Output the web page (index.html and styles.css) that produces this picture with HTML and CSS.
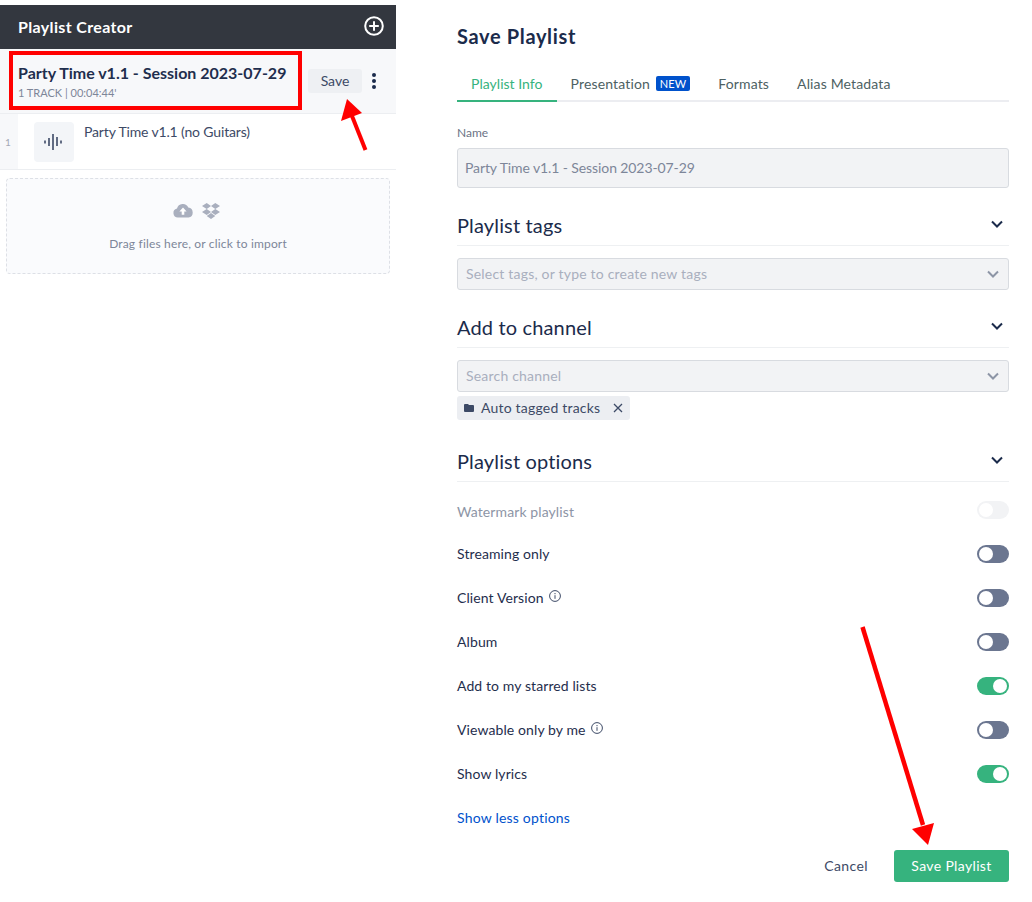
FILE: index.html
```html
<!DOCTYPE html>
<html lang="en">
<head>
<meta charset="utf-8">
<title>Save Playlist</title>
<link rel="stylesheet" href="styles.css">
</head>
<body>
<div class="page">
  <aside class="left">
    <header class="lhead">
      <span class="lhead-title">Playlist Creator</span>
      <svg class="plus" viewBox="0 0 20 20" width="20" height="20"><circle cx="10" cy="10" r="8.8" fill="none" stroke="#fff" stroke-width="2"/><path d="M10 5.2v9.6M5.2 10h9.6" stroke="#fff" stroke-width="2" fill="none"/></svg>
    </header>
    <div class="session">
      <div class="session-info">
        <div class="session-name">Party Time v1.1 - Session 2023-07-29</div>
        <div class="session-meta">1 TRACK | 00:04:44'</div>
      </div>
      <button class="save-small">Save</button>
      <svg class="dots" viewBox="0 0 4 16" width="4" height="16"><circle cx="2" cy="2" r="2"/><circle cx="2" cy="8" r="2"/><circle cx="2" cy="14" r="2"/></svg>
    </div>
    <div class="track">
      <div class="track-num">1</div>
      <div class="track-tile">
        <svg viewBox="0 0 20 16" width="20" height="16"><path d="M1 6.5v3M5 4v8M9 0v16M13 3v9M17 6.5v3" stroke="#3d4a66" stroke-width="1.6" fill="none"/></svg>
      </div>
      <div class="track-name">Party Time v1.1 (no Guitars)</div>
    </div>
    <div class="drop">
      <div class="drop-icons">
        <svg viewBox="0 0 20 15" width="20" height="15"><path d="M5 14.5a4.5 4.5 0 0 1-1-8.9A6 6 0 0 1 15.3 4.6 5 5 0 0 1 15.5 14.5Z" fill="#a9afbe"/><path d="M10 4.5l3.6 4h-2.3v3.3H8.7V8.500H6.400Z" fill="#fff"/></svg>
        <svg viewBox="0 0 18 16" width="18" height="16"><path d="M4.700 0 0 3l4.700 3L9 3ZM13.300 0 9 3l4.300 3L18 3ZM0 9l4.700 3L9 9 4.700 6ZM13.300 6 9 9l4.300 3L18 9ZM4.700 13 9 16l4.300-3L9 10Z" fill="#a9afbe"/></svg>
      </div>
      <div class="drop-text">Drag files here, or click to import</div>
    </div>
  </aside>

  <main class="right">
    <h1 class="title">Save Playlist</h1>
    <nav class="tabs">
      <a class="tab tab-on">Playlist Info</a>
      <a class="tab">Presentation <span class="new">NEW</span></a>
      <a class="tab">Formats</a>
      <a class="tab">Alias Metadata</a>
    </nav>
    <label class="label">Name</label>
    <div class="input">Party Time v1.1 - Session 2023-07-29</div>

    <div class="sec sec-tags">
      <h2>Playlist tags</h2>
      <svg class="chev" viewBox="0 0 12 8" width="12" height="8"><path d="M1 1.500l5 5 5-5" fill="none" stroke="#1b2b4b" stroke-width="2"/></svg>
    </div>
    <div class="select">
      <span class="ph">Select tags, or type to create new tags</span>
      <svg viewBox="0 0 12 8" width="12" height="8"><path d="M1 1.500l5 5 5-5" fill="none" stroke="#8d95a6" stroke-width="2"/></svg>
    </div>

    <div class="sec sec-chan">
      <h2>Add to channel</h2>
      <svg class="chev" viewBox="0 0 12 8" width="12" height="8"><path d="M1 1.500l5 5 5-5" fill="none" stroke="#1b2b4b" stroke-width="2"/></svg>
    </div>
    <div class="select">
      <span class="ph">Search channel</span>
      <svg viewBox="0 0 12 8" width="12" height="8"><path d="M1 1.500l5 5 5-5" fill="none" stroke="#8d95a6" stroke-width="2"/></svg>
    </div>
    <div class="chip">
      <svg viewBox="0 0 10 8" width="10" height="8"><path d="M0 1a1 1 0 0 1 1-1h3l1 1h4a1 1 0 0 1 1 1v5a1 1 0 0 1-1 1H1a1 1 0 0 1-1-1Z" fill="#3d4a66"/></svg>
      <span class="ph">Auto tagged tracks</span>
      <svg class="chip-x" viewBox="0 0 10 10" width="10" height="10"><path d="M1 1l8 8M9 1l-8 8" stroke="#3d4a66" stroke-width="1.300" fill="none"/></svg>
    </div>

    <div class="sec sec-opts">
      <h2>Playlist options</h2>
      <svg class="chev" viewBox="0 0 12 8" width="12" height="8"><path d="M1 1.500l5 5 5-5" fill="none" stroke="#1b2b4b" stroke-width="2"/></svg>
    </div>
    <div class="opts">
      <div class="opt opt-muted"><span class="opt-label">Watermark playlist</span><span class="tg tg-dis"></span></div>
      <div class="opt"><span class="opt-label">Streaming only</span><span class="tg"></span></div>
      <div class="opt"><span class="opt-label">Client Version <svg class="info" viewBox="0 0 12 12" width="12" height="12"><circle cx="6" cy="6" r="5.400" fill="none" stroke="#3d4a66"/><path d="M6 5.200v3.600M6 3v1.200" stroke="#3d4a66" fill="none"/></svg></span><span class="tg"></span></div>
      <div class="opt"><span class="opt-label">Album</span><span class="tg"></span></div>
      <div class="opt"><span class="opt-label">Add to my starred lists</span><span class="tg tg-on"></span></div>
      <div class="opt"><span class="opt-label">Viewable only by me <svg class="info" viewBox="0 0 12 12" width="12" height="12"><circle cx="6" cy="6" r="5.400" fill="none" stroke="#3d4a66"/><path d="M6 5.200v3.600M6 3v1.200" stroke="#3d4a66" fill="none"/></svg></span><span class="tg"></span></div>
      <div class="opt"><span class="opt-label">Show lyrics</span><span class="tg tg-on"></span></div>
      <div class="opt"><a class="more opt-label">Show less options</a></div>
    </div>
    <footer class="foot">
      <button class="cancel">Cancel</button>
      <button class="primary">Save Playlist</button>
    </footer>
  </main>
</div>
<svg class="marks" viewBox="0 0 1032 902" width="1032" height="902">
  <rect x="11" y="53" width="289" height="55" fill="none" stroke="#f00" stroke-width="4"/>
  <path d="M352 116l13.500 34" stroke="#f00" stroke-width="4" fill="none"/>
  <path d="M347 99l15 14-21 8Z" fill="#f00"/>
  <path d="M862.500 627l60.500 198" stroke="#f00" stroke-width="4.500" fill="none"/>
  <path d="M928 845l-16-16 22-6Z" fill="#f00"/>
</svg>
</body>
</html>
```
FILE: styles.css
```css
* { box-sizing: border-box; }
html, body { margin: 0; padding: 0; background: #fff; }
body { font-family: Lato, "Liberation Sans", sans-serif; color: #1b2b4b; height: 902px; overflow: hidden; position: relative; }
button { font: inherit; border: 0; cursor: pointer; }
.page { display: flex; align-items: flex-start; }

.left { width: 396px; flex: none; margin-top: 5px; }
.lhead { height: 44px; background: #33373f; display: flex; align-items: center; justify-content: space-between; padding: 0 12px 2px 18px; }
.lhead-title { color: #fff; font-size: 16px; font-weight: 700; letter-spacing: .35px; }
.session { height: 65px; background: #f7f8fa; border-bottom: 1px solid #eceef1; display: flex; align-items: center; padding: 0 20px 0 18px; }
.session-info { flex: 1; }
.session-name { font-size: 16px; font-weight: 700; color: #1f2e4d; white-space: nowrap; }
.session-meta { font-size: 11px; color: #7d8699; margin-top: 4px; }
.save-small { width: 54px; height: 24px; background: #eef0f3; color: #3d4a66; border-radius: 3px; font-size: 14px; margin-right: 10px; padding: 0 0 2px; }
.dots { fill: #1b2b4b; }
.track { height: 56px; border-bottom: 1px solid #eceef1; display: flex; align-items: flex-start; }
.track-num { width: 18px; height: 55px; background: #f7f8fa; color: #a3a9b6; font-size: 10px; line-height: 56px; padding-left: 5px; }
.track-tile { width: 40px; height: 40px; margin: 8px 10px 0 16px; background: #f3f5f8; border-radius: 4px; display: flex; align-items: center; justify-content: center; }
.track-name { font-size: 14px; letter-spacing: -.15px; color: #3d4a66; line-height: 18px; margin-top: 9px; }
.drop { height: 96px; margin: 8px 6px 0; background: #fafbfd; border: 1px dashed #dde0e6; border-radius: 4px; display: flex; flex-direction: column; align-items: center; padding-top: 23px; }
.drop-icons { display: flex; gap: 9px; align-items: center; height: 17px; padding-right: 4px; }
.drop-text { font-size: 12px; letter-spacing: .17px; color: #7d8699; margin-top: 17px; line-height: 16px; }

.right { width: 552px; flex: none; margin-left: 61px; padding-top: 24px; }
.title { margin: 0; font-size: 20px; line-height: 24px; font-weight: 700; color: #1b2b4b; letter-spacing: .65px; }
.tabs { display: flex; margin-top: 24px; height: 30px; border-bottom: 2px solid #ecedf1; }
.tab { font-size: 14px; line-height: 24px; height: 30px; color: #4d6163; padding: 0 14px; white-space: nowrap; letter-spacing: .15px; }
.tab-on { color: #36b37e; border-bottom: 2px solid #36b37e; letter-spacing: .03px; }
.new { display: inline-block; background: #0052cc; color: #fff; font-size: 11px; line-height: 15px; padding: 0 4px; border-radius: 2px; margin-left: 2px; vertical-align: 1px; letter-spacing: .1px; }
.label { display: block; font-size: 12px; color: #6b7385; margin-top: 23px; line-height: 16px; }
.input { height: 40px; margin-top: 7px; background: #f2f3f5; border: 1px solid #d8dbe0; border-radius: 3px; padding: 0 7px; line-height: 38px; font-size: 14px; letter-spacing: -.1px; color: #7d8699; }
.sec { display: flex; align-items: center; justify-content: space-between; height: 40px; border-bottom: 1px solid #eef0f2; padding-right: 6px; }
.sec h2 { margin: 0 0 2px; font-size: 20px; font-weight: 400; color: #1b2b4b; letter-spacing: .15px; }
.sec-tags, .sec-chan { margin-top: 18px; }
.sec-opts { margin-top: 22px; }
.chev { margin-top: -4px; }
.select { height: 32px; margin-top: 12px; background: #f2f3f5; border: 1px solid #d8dbe0; border-radius: 3px; padding: 0 9px 0 8px; display: flex; align-items: center; justify-content: space-between; font-size: 14px; letter-spacing: .2px; color: #a9afbe; }
.ph { margin-bottom: 2px; }
.chip { display: inline-flex; align-items: center; gap: 7px; height: 24px; margin-top: 4px; padding: 0 7px; background: #eceef2; border-radius: 3px; font-size: 14px; letter-spacing: .2px; color: #3d4a66; }
.chip-x { margin-left: 6px; }
.opts { margin-top: 6px; }
.opt { height: 44px; display: flex; align-items: center; justify-content: space-between; font-size: 14px; letter-spacing: .1px; color: #1f2e4d; }
.opt-label { margin-bottom: 2px; }
.opt-muted { color: #8d95a6; }
.opt-muted .opt-label { margin-top: 4px; }
.info { vertical-align: 1px; margin-left: 2px; }
.tg { width: 32px; height: 18px; border-radius: 9px; background: #6b7690; position: relative; }
.tg::after { content: ""; position: absolute; left: 2px; top: 2px; width: 14px; height: 14px; border-radius: 50%; background: #fff; }
.tg-on { background: #36b37e; }
.tg-on::after { left: 16px; }
.tg-dis { background: #f2f3f5; }
.more { color: #0052cc; font-size: 14px; letter-spacing: .2px; }
.foot { display: flex; justify-content: flex-end; align-items: center; margin-top: 10px; }
.cancel { background: none; font-size: 14px; letter-spacing: .4px; color: #3d4a66; margin-right: 26px; padding: 0 0 2px; }
.primary { width: 115px; height: 32px; background: #36b37e; color: #fff; border-radius: 3px; font-size: 14px; letter-spacing: .35px; padding: 0 0 2px; }

.marks { position: absolute; left: 0; top: 0; pointer-events: none; }
```
